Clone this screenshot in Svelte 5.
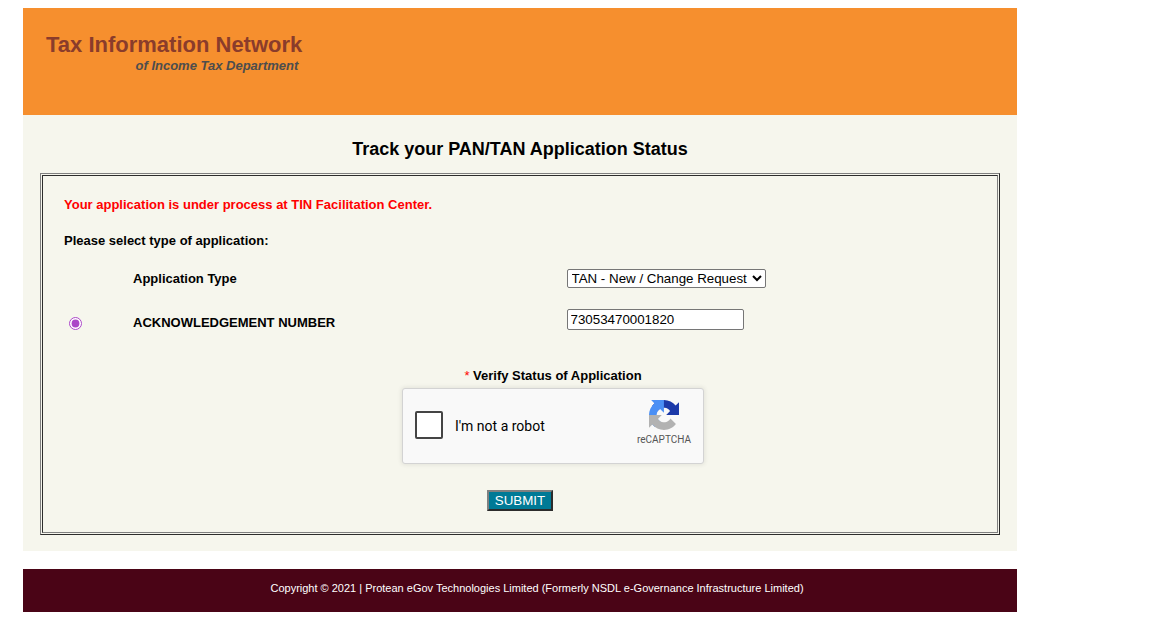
<script>
  let applicationType = $state('tan');
  let searchBy = $state('ack');
  let acknowledgement = $state('73053470001820');
</script>

<div class="page">
  <header class="banner">
    <div class="brand">
      <div class="brand-name">Tax Information Network</div>
      <div class="brand-sub">of Income Tax Department</div>
    </div>
  </header>

  <main>
    <h1>Track your PAN/TAN Application Status</h1>
    <div class="frame">
      <form class="panel" onsubmit={(e) => e.preventDefault()}>
        <p class="message">Your application is under process at TIN Facilitation Center.</p>
        <p class="prompt">Please select type of application:</p>

        <div class="fields">
          <label class="name" for="type">Application Type</label>
          <div class="control">
            <select id="type" bind:value={applicationType}>
              <option value="tan">TAN - New / Change Request</option>
              <option value="pan">PAN - New / Change Request</option>
            </select>
          </div>

          <input class="pick" type="radio" id="by-ack" value="ack" aria-label="Acknowledgement number" bind:group={searchBy} />
          <label class="name" for="ack">ACKNOWLEDGEMENT NUMBER</label>
          <div class="control">
            <input id="ack" class="number" type="text" bind:value={acknowledgement} />
          </div>
        </div>

        <div class="verify">
          <div class="verify-title"><span class="star">*</span> Verify Status of Application</div>
          <div class="captcha">
            <input type="checkbox" id="robot" />
            <label for="robot">I'm not a robot</label>
            <div class="mark">
              <svg viewBox="0 0 64 64" width="30" height="30" aria-hidden="true">
                <path fill="#1c3aa9" d="M64 31.955l-.033-1.37V4.687l-7.16 7.16C50.948 4.674 42.033.093 32.05.093c-10.4 0-19.622 4.96-25.458 12.64l11.736 11.86a15.55 15.55 0 0 1 4.754-5.334c2.05-1.6 4.952-2.906 8.968-2.906.485 0 .86.057 1.135.163 4.976.393 9.288 3.14 11.828 7.124l-8.307 8.307L64 31.953" />
                <path fill="#4a8ff5" d="M31.862.094l-1.37.033H4.594l7.16 7.16C4.58 13.147 0 22.06 0 32.046c0 10.4 4.96 19.622 12.64 25.458L24.5 45.768a15.55 15.55 0 0 1-5.334-4.754c-1.6-2.05-2.906-4.952-2.906-8.968 0-.485.057-.86.163-1.135.393-4.976 3.14-9.288 7.124-11.828l8.307 8.307L31.86.095" />
                <path fill="#b2b2b2" d="M.001 32.045l.033 1.37v25.898l7.16-7.16c5.86 7.173 14.774 11.754 24.76 11.754 10.4 0 19.622-4.96 25.458-12.64l-11.736-11.86a15.55 15.55 0 0 1-4.754 5.334c-2.05 1.6-4.952 2.906-8.968 2.906-.485 0-.86-.057-1.135-.163-4.976-.393-9.288-3.14-11.828-7.124l8.307-8.307c-10.522.04-22.4.066-27.295-.005" />
              </svg>
              <span>reCAPTCHA</span>
            </div>
          </div>
        </div>

        <button class="submit" type="submit">SUBMIT</button>
      </form>
    </div>
  </main>

  <footer>Copyright © 2021 | Protean eGov Technologies Limited (Formerly NSDL e-Governance Infrastructure Limited)</footer>
</div>

<style>
  :global(body) {
    margin: 0;
    background: #fff;
    font-family: "Liberation Sans", Arial, sans-serif;
    font-size: 13px;
    line-height: 16px;
    color: #000;
  }

  .page {
    max-width: 994px;
    margin: 8px 23px 0;
  }

  .banner {
    background: #f68f2e;
    padding: 24px 23px 40px;
    display: flex;
  }

  .brand {
    font-weight: bold;
    text-align: right;
  }

  .brand-name {
    font-size: 22px;
    line-height: 25px;
    color: #8a3c2b;
  }

  .brand-sub {
    font-style: italic;
    line-height: 18px;
    color: #4d4d4d;
    padding-right: 4px;
  }

  main {
    background: #f6f6ed;
    padding: 22px 17px 16px;
  }

  h1 {
    margin: 0 0 12px;
    font-size: 18px;
    line-height: 24px;
    text-align: center;
  }

  .frame {
    border: 1px solid;
    border-color: #808080 #2c2c2c #2c2c2c #808080;
    padding: 1px;
  }

  .panel {
    border: 1px solid;
    border-color: #2c2c2c #808080 #808080 #2c2c2c;
    padding: 21px;
    display: flex;
    flex-direction: column;
  }

  p {
    margin: 0 0 20px;
    font-weight: bold;
  }

  p.prompt {
    margin-bottom: 19px;
  }

  .message {
    color: #f00;
  }

  .fields {
    display: grid;
    grid-template-columns: 69px 1fr 1fr;
    grid-template-rows: 20px 22px;
    row-gap: 20px;
    align-items: center;
  }

  .name {
    grid-column: 2;
    padding-top: 2px;
    font-weight: bold;
  }

  .control {
    grid-column: 3;
    display: flex;
    padding-left: 12px;
  }

  .pick {
    grid-column: 1;
    grid-row: 2;
    width: 13px;
    height: 13px;
    margin: 8px 0 0 5px;
    accent-color: #ab47c7;
  }

  .pick + .name {
    padding-top: 8px;
  }

  select,
  .number {
    box-sizing: border-box;
    border: 1px solid #767676;
    border-radius: 2px;
    background-color: #fff;
    color: #000;
    font-family: "Liberation Sans", Arial, sans-serif;
  }

  select {
    height: 19px;
    width: 199px;
    padding: 0;
  }

  .number {
    width: 177px;
    height: 21px;
    padding: 1px 3px;
  }

  .verify {
    display: flex;
    flex-direction: column;
    align-items: center;
    margin-top: 38px;
    padding-left: 66px;
  }

  .verify-title {
    padding-bottom: 4px;
    font-weight: bold;
  }

  .star {
    color: #f00;
    font-weight: normal;
  }

  .captcha {
    box-sizing: border-box;
    width: 302px;
    height: 76px;
    display: flex;
    align-items: center;
    padding: 0 12px;
    background: #f9f9f9;
    border: 1px solid #d3d3d3;
    border-radius: 3px;
    box-shadow: 0 0 4px 1px rgba(0, 0, 0, 0.08);
    font-family: Roboto, "Liberation Sans", sans-serif;
    font-size: 14px;
  }

  .captcha input {
    appearance: none;
    box-sizing: border-box;
    width: 28px;
    height: 28px;
    margin: 0 12px 2px 0;
    border: 2px solid #444;
    border-radius: 2px;
    background: #fff;
  }

  .captcha label {
    flex: 1;
  }

  .mark {
    display: flex;
    flex-direction: column;
    align-items: center;
    gap: 4px;
    color: #555;
    font-size: 10px;
    line-height: 12px;
    padding-bottom: 6px;
  }

  .submit {
    align-self: center;
    margin-top: 26px;
    height: 21px;
    padding: 0 6px;
    border: 2px solid;
    border-color: #808080 #2c2c2c #2c2c2c #808080;
    background: #007a96;
    color: #fff;
    font-family: "Liberation Sans", Arial, sans-serif;
    line-height: 16px;
  }

  footer {
    margin-top: 18px;
    padding: 11px 0 16px 34px;
    background: #4a0416;
    color: #fff;
    font-size: 11px;
    text-align: center;
  }
</style>
